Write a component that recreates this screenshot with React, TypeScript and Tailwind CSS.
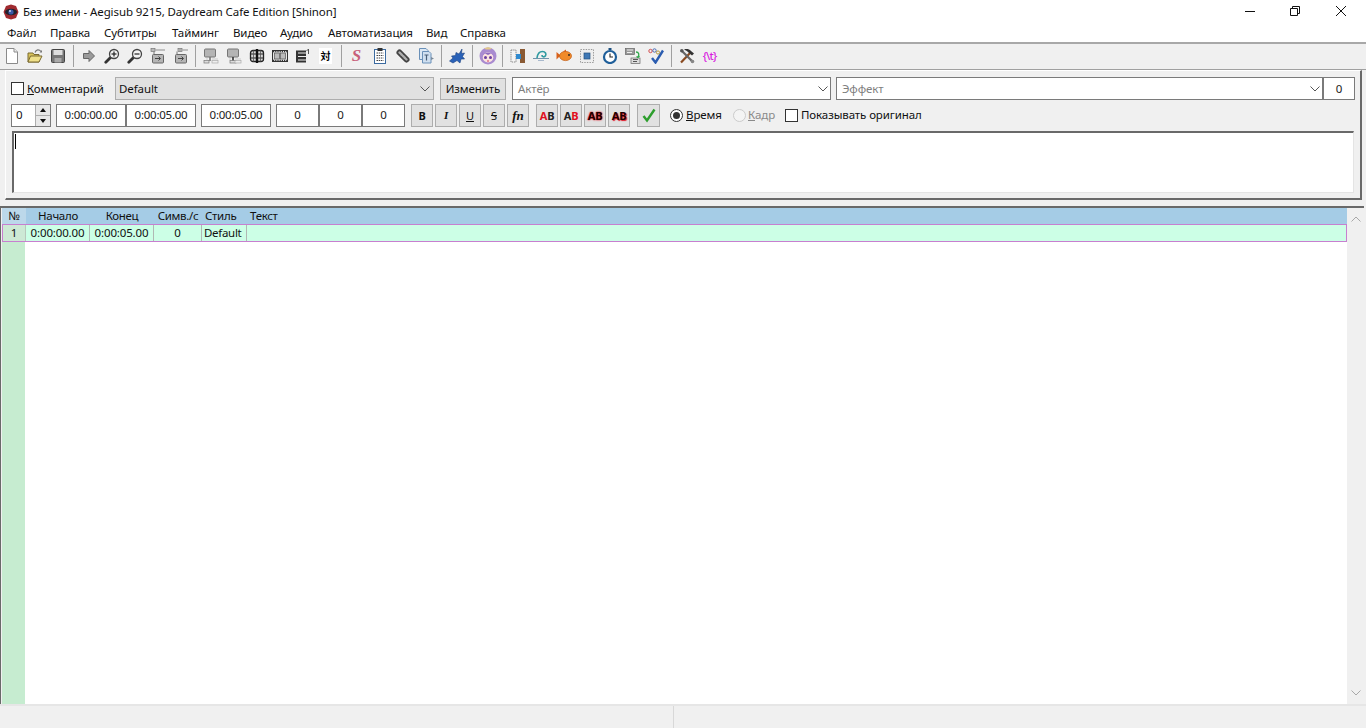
import React from 'react';

function Chevron({ className = '' }: { className?: string }) {
  return (
    <svg viewBox="0 0 10 6" className={`h-[6px] w-[10px] flex-shrink-0 ${className}`} fill="none" stroke="currentColor" strokeWidth="1">
      <path d="M0.5 0.5 L5 5 L9.5 0.5" />
    </svg>
  );
}

function Svg({ children }: { children: React.ReactNode }) {
  return (
    <svg viewBox="0 0 16 16" className="h-4 w-4">
      {children}
    </svg>
  );
}

const IconNew = () => (
  <Svg>
    <path d="M2.5 0.5H10L13.5 4V15.5H2.5Z" fill="#fff" stroke="#8a8a8a" />
    <path d="M10 0.5V4H13.5" fill="#eee" stroke="#8a8a8a" />
  </Svg>
);
const IconOpen = () => (
  <Svg>
    <path d="M1 5H6L7 6.5H12V14H1Z" fill="#d9c45a" stroke="#7a6a30" />
    <path d="M1 14L3.5 8H15L12 14Z" fill="#efe08a" stroke="#7a6a30" />
    <path d="M8 4.5C9 1.5 12 1 14 3.5" fill="none" stroke="#777" strokeWidth="1.2" />
    <path d="M12.5 4.5H15V2Z" fill="#777" />
  </Svg>
);
const IconSave = () => (
  <Svg>
    <rect x="1.5" y="1.5" width="13" height="13" rx="1" fill="#777" stroke="#444" />
    <rect x="3.5" y="2" width="9" height="5" fill="#ddd" />
    <rect x="4.5" y="10" width="7" height="4.5" fill="#aaa" />
  </Svg>
);
const IconArrow = () => (
  <Svg>
    <path d="M2.5 5.5H8V2.5L13.5 8L8 13.5V10.5H2.5Z" fill="#9a9a9a" stroke="#666" />
  </Svg>
);
const IconZoom = ({ plus }: { plus?: boolean }) => (
  <Svg>
    <path d="M6.5 9.5L1.8 14.2" stroke="#333" strokeWidth="2.8" strokeLinecap="round" />
    <circle cx="10" cy="6" r="4.5" fill="#f2f2f2" stroke="#444" strokeWidth="1.3" />
    <path d="M7.5 6H12.5" stroke="#222" strokeWidth="1.2" />
    {plus && <path d="M10 3.5V8.5" stroke="#222" strokeWidth="1.2" />}
  </Svg>
);
const IconJump = ({ down }: { down?: boolean }) => (
  <Svg>
    <rect x={down ? 5 : 1} y="0.5" width="4" height="3" fill="#bbb" stroke="#777" strokeWidth="0.7" />
    <path d="M5 2H15" stroke="#aaa" strokeWidth="1.4" />
    <path d="M4 3.5V6" stroke="#777" />
    <rect x="2.5" y="6.5" width="11" height="8.5" rx="1" fill="#b5b5b5" stroke="#666" />
    <path d="M5 10.5H10M8.5 8.5L10.5 10.5L8.5 12.5" fill="none" stroke="#444" />
  </Svg>
);
const IconMonitor = ({ dark }: { dark?: boolean }) => (
  <Svg>
    <rect x="1.5" y="1" width="11" height="8" rx="1" fill="#b4b4b4" stroke="#777" />
    <path d="M7 9V13" stroke={dark ? '#333' : '#777'} strokeWidth="1.6" />
    <path d="M3 11H5M9 11H15" stroke="#ccc" />
    <rect x={dark ? 4 : 1} y="12.5" width={dark ? 6 : 5} height="2.5" fill="#ddd" stroke="#777" strokeWidth="0.7" />
    <rect x="9" y="12.5" width="6" height="2.5" fill="#eee" stroke="#aaa" strokeWidth="0.7" />
  </Svg>
);
const IconFilmCross = () => (
  <Svg>
    <rect x="1.5" y="2.5" width="13" height="11" rx="2.5" fill="#d8d8d8" stroke="#222" strokeWidth="1.3" />
    <path d="M1.5 6H14.5M1.5 10H14.5" stroke="#222" strokeWidth="1.2" />
    <path d="M8 1V15" stroke="#111" strokeWidth="2.4" />
    <path d="M4.5 2.5V13.5M11.5 2.5V13.5" stroke="#555" strokeWidth="0.8" />
  </Svg>
);
const IconFilm = () => (
  <Svg>
    <rect x="0.5" y="2.5" width="15" height="11" fill="#e6e6e6" stroke="#333" />
    <path d="M1 3.5H15M1 12.5H15" stroke="#333" strokeWidth="1.6" strokeDasharray="1.2 1" />
    <rect x="2.5" y="5" width="5" height="6" fill="#bbb" stroke="#555" strokeWidth="0.7" />
    <rect x="8.5" y="5" width="5" height="6" fill="#bbb" stroke="#555" strokeWidth="0.7" />
  </Svg>
);
const IconFilmTime = () => (
  <Svg>
    <rect x="1" y="2.5" width="10" height="12" fill="#333" />
    <path d="M3 5H11M3 8.5H11M3 12H11" stroke="#eee" />
    <path d="M13.5 1V6" stroke="#555" />
    <path d="M11.5 3L13.5 1" stroke="#555" />
  </Svg>
);
const IconSnail = () => (
  <Svg>
    <path d="M0 10.5H16" stroke="#6f93aa" />
    <path d="M4 10C4.5 6 6.5 3.5 9.5 3.5C12.5 3.5 13.5 6 12.5 7.8C11.3 9.5 8.8 9 9 7" fill="none" stroke="#2f9aa0" strokeWidth="1.6" />
    <path d="M5 12.5H11" stroke="#a8b8cc" />
  </Svg>
);
const IconFish = () => (
  <Svg>
    <path d="M0.5 4L4.5 7.5L0.5 11.5Z" fill="#d8601a" />
    <ellipse cx="9.5" cy="8" rx="6" ry="4.6" fill="#f08a2a" stroke="#c25a10" strokeWidth="0.7" />
    <path d="M7 3.5L10 1.5V4Z" fill="#d8601a" />
    <circle cx="13" cy="7" r="0.9" fill="#222" />
  </Svg>
);
const IconSelect = () => (
  <Svg>
    <rect x="1.5" y="1.5" width="13" height="13" fill="#eee" stroke="#999" strokeDasharray="1.4 1.2" />
    <rect x="5" y="5" width="6" height="6" fill="#3f78b5" stroke="#24507f" strokeWidth="0.7" />
  </Svg>
);
const IconClock = () => (
  <Svg>
    <rect x="6.5" y="0" width="3" height="2" fill="#1b4f80" />
    <circle cx="8" cy="9" r="6" fill="#fff" stroke="#1f5f9a" strokeWidth="2.2" />
    <path d="M8 5.5V9H11" fill="none" stroke="#222" strokeWidth="1.1" />
  </Svg>
);
const IconTranslate = () => (
  <Svg>
    <rect x="0.5" y="0.5" width="9" height="6" fill="#999" stroke="#666" strokeWidth="0.7" />
    <rect x="6" y="10" width="9" height="5.5" fill="#ddd" stroke="#666" strokeWidth="0.7" />
    <path d="M2 2H8M2 4.5H7" stroke="#eee" />
    <path d="M8 11.5H13M8 13.5H12" stroke="#555" />
    <path d="M11 4C14 4 14.5 7 13 9M11.5 8.5L13 9.5L14.5 8" fill="none" stroke="#2fa84a" strokeWidth="1.3" />
  </Svg>
);
const IconCheckAbc = () => (
  <Svg>
    <path d="M4 10L7.5 14.5L15 2.5" fill="none" stroke="#2a5cb0" strokeWidth="2.4" />
    <circle cx="2.5" cy="3" r="1.7" fill="none" stroke="#d04040" strokeWidth="0.9" />
    <circle cx="6.5" cy="2.5" r="1.7" fill="none" stroke="#3a60b0" strokeWidth="0.9" />
    <circle cx="10" cy="4.5" r="1.6" fill="none" stroke="#b0902a" strokeWidth="0.9" />
  </Svg>
);
const IconTools = () => (
  <Svg>
    <path d="M2 14.5L12 4" stroke="#8a4a20" strokeWidth="2.2" />
    <path d="M5 1.5C8 0.5 10 1 12 3L15 5.5L13 7.5L9.5 4.5C8 3 7 2.5 5 1.5Z" fill="#333" />
    <path d="M3 3L14 14" stroke="#666" strokeWidth="2.2" />
    <circle cx="2.8" cy="2.8" r="1.8" fill="#555" />
    <circle cx="13.5" cy="13.5" r="1.8" fill="#888" />
  </Svg>
);
const IconClipboard = () => (
  <Svg>
    <rect x="2.5" y="1.5" width="11" height="14" fill="#fff" stroke="#3a6aa0" />
    <rect x="5.5" y="0" width="5" height="3" fill="#333" />
    <path d="M4.5 5H11.5M4.5 7.5H11.5M4.5 10H11.5M4.5 12.5H11.5" stroke="#444" strokeDasharray="1.5 0.7" />
  </Svg>
);
const IconPill = () => (
  <Svg>
    <path d="M4.5 4.5L11.5 11.5" stroke="#444" strokeWidth="6" strokeLinecap="round" />
    <path d="M4.5 4.5L11.5 11.5" stroke="#b0b0b0" strokeWidth="2.4" strokeLinecap="round" strokeDasharray="1 1.3" />
  </Svg>
);
const IconDocT = () => (
  <Svg>
    <path d="M1.5 0.5H8L10 2.5V11.5H1.5Z" fill="#dce8f4" stroke="#6a90b8" />
    <path d="M4.5 3.5H11L13 5.5V15H4.5Z" fill="#cfdff0" stroke="#6a90b8" />
    <path d="M6.5 7H10.5M8.5 7V12.5" stroke="#4a5f78" strokeWidth="1.2" />
    <path d="M13 9L16 10.5L13 12Z" fill="#7a8a9a" />
  </Svg>
);
const IconSplash = () => (
  <Svg>
    <path d="M0.5 13L4 10L2.5 8L6.5 7.5L7 4.5L10 6L13 1L12.5 5.5L15.5 5L13.5 8.5L15.5 11L12 11L11 15L8 12.5L4 15Z" fill="#2a62b8" stroke="#1a3f80" strokeWidth="0.6" />
  </Svg>
);
const IconAnime = () => (
  <svg viewBox="0 0 18 18" className="h-[18px] w-[18px]">
    <circle cx="9" cy="9" r="8.5" fill="#a98bd0" />
    <path d="M5 1.5L9 0L13 1.5L11 2.5H7Z" fill="#e2c88a" />
    <ellipse cx="9" cy="10.5" rx="5.3" ry="5" fill="#fbe3e0" />
    <path d="M3.5 8C6 5 12 5 14.5 8L12 6.5L9 8L6 6.5Z" fill="#8f6cc0" />
    <circle cx="6.5" cy="10.5" r="1.5" fill="#6a3fa0" />
    <circle cx="11.5" cy="10.5" r="1.5" fill="#6a3fa0" />
    <path d="M8 14H10" stroke="#d04060" />
  </svg>
);
const IconDoor = () => (
  <Svg>
    <rect x="1" y="2" width="5" height="12" fill="#f4f4f4" stroke="#888" strokeDasharray="1.4 0.8" />
    <rect x="10" y="1" width="5" height="14" fill="#8a5a34" />
    <rect x="6" y="6" width="5" height="5" fill="#2f8ad0" />
  </Svg>
);
const IconEye = () => (
  <svg viewBox="0 0 16 16" className="h-4 w-4">
    <path d="M8 0.5L13 2L15.5 8L13 14L8 15.5L3 14L0.5 8L3 2Z" fill="#a02a30" />
    <ellipse cx="8" cy="8" rx="6" ry="3.2" fill="#20222e" />
    <circle cx="8" cy="8" r="2.6" fill="#3a58a8" />
    <circle cx="7" cy="7" r="0.9" fill="#d8e0f0" />
  </svg>
);

type Tool = { node: React.ReactNode } | { sep: number };

const tools: Tool[] = [
  { node: <IconNew /> },
  { node: <IconOpen /> },
  { node: <IconSave /> },
  { sep: 8 },
  { node: <IconArrow /> },
  { node: <IconZoom plus /> },
  { node: <IconZoom /> },
  { node: <IconJump /> },
  { node: <IconJump down /> },
  { sep: 7 },
  { node: <IconMonitor /> },
  { node: <IconMonitor dark /> },
  { node: <IconFilmCross /> },
  { node: <IconFilm /> },
  { node: <IconFilmTime /> },
  { node: <span className="bg-white px-[2px] font-['Noto_Sans_CJK_SC',sans-serif] text-[10px] leading-4 font-bold text-black">対</span> },
  { sep: 8 },
  { node: <span className="font-['Liberation_Serif',serif] text-[17px] leading-4 font-bold text-[#c8607a] italic">S</span> },
  { node: <IconClipboard /> },
  { node: <IconPill /> },
  { node: <IconDocT /> },
  { sep: 8 },
  { node: <IconSplash /> },
  { sep: 8 },
  { node: <IconAnime /> },
  { sep: 7 },
  { node: <IconDoor /> },
  { node: <IconSnail /> },
  { node: <IconFish /> },
  { node: <IconSelect /> },
  { node: <IconClock /> },
  { node: <IconTranslate /> },
  { node: <IconCheckAbc /> },
  { sep: 8 },
  { node: <IconTools /> },
  { node: <span className="text-[11px] leading-4 font-medium tracking-[-0.8px] text-[#d820e0]">{'{\\t}'}</span> },
];

const menus: [string, string][] = [
  ['Файл', 'w-[43px]'],
  ['Правка', 'w-[54px]'],
  ['Субтитры', 'w-[68px]'],
  ['Тайминг', 'w-[61px]'],
  ['Видео', 'w-[47px]'],
  ['Аудио', 'w-[48px]'],
  ['Автоматизация', 'w-[98px]'],
  ['Вид', 'w-[34px]'],
  ['Справка', 'w-[60px]'],
];

function Checkbox() {
  return <span className="h-[13px] w-[13px] flex-shrink-0 border border-[#333] bg-white" />;
}

function ValueBox({ value, className = '' }: { value: string; className?: string }) {
  return (
    <div className={`flex h-[23px] items-center justify-center border border-[#7a7a7a] bg-white tracking-[-0.25px] text-[#222] ${className}`}>
      {value}
    </div>
  );
}

function StyleButton({ children, className = '' }: { children: React.ReactNode; className?: string }) {
  return (
    <div className={`flex h-[23px] w-[22px] items-center justify-center border border-[#adadad] bg-[#e1e1e1] text-[11px] ${className}`}>
      {children}
    </div>
  );
}

function Combo({ label, className = '' }: { label: string; className?: string }) {
  return (
    <div className={`flex h-[23px] items-center justify-between border border-[#7a7a7a] bg-white pr-[2px] pl-[5px] text-[#808080] ${className}`}>
      <span>{label}</span>
      <Chevron className="text-[#555]" />
    </div>
  );
}

const columns: { head: string; cell: string; width: string }[] = [
  { head: 'Начало', cell: '0:00:00.00', width: 'w-[64px]' },
  { head: 'Конец', cell: '0:00:05.00', width: 'w-[64px]' },
  { head: 'Симв./с', cell: '0', width: 'w-[48px]' },
];

export default function App() {
  return (
    <div className="flex h-[728px] w-[1366px] flex-col overflow-hidden bg-[#f0f0f0] font-['Noto_Sans','Liberation_Sans',sans-serif] text-[11.5px] leading-none tracking-[-0.1px] text-[#111]">
      {/* title bar */}
      <div className="flex h-[23px] items-center bg-white pl-[3px]">
        <IconEye />
        <span className="ml-[4px] flex-1">Без имени - Aegisub 9215, Daydream Cafe Edition [Shinon]</span>
        <div className="flex items-center pr-[2px] pb-[2px]">
          <div className="flex w-[44px] justify-center">
            <svg viewBox="0 0 12 12" className="h-3 w-3" fill="none" stroke="#111"><path d="M1 6.5H11" /></svg>
          </div>
          <div className="flex w-[46px] justify-center">
            <svg viewBox="0 0 12 12" className="h-3 w-3" fill="none" stroke="#111"><path d="M1.5 3.5H8.5V10.5H1.5Z M3.5 3.5V1.5H10.5V8.5H8.5" /></svg>
          </div>
          <div className="flex w-[46px] justify-center">
            <svg viewBox="0 0 12 12" className="h-3 w-3" fill="none" stroke="#111"><path d="M1 1L11 11M11 1L1 11" /></svg>
          </div>
        </div>
      </div>

      {/* menu */}
      <div className="flex h-[19px] items-center bg-white pl-[7px]">
        {menus.map(([label, width]) => (
          <span key={label} className={width}>{label}</span>
        ))}
      </div>

      {/* toolbar */}
      <div className="flex h-[28px] items-center border-t-2 border-b border-t-[#a8a8a8] border-b-[#a0a0a0] bg-[#f0f0f0] pb-[1px]">
        {tools.map((tool, i) =>
          'sep' in tool ? (
            <div key={i} className={`flex h-[22px] justify-center ${tool.sep === 7 ? 'w-[7px]' : 'w-[8px]'}`}>
              <div className="w-px bg-[#a0a0a0]" />
            </div>
          ) : (
            <div key={i} className="flex h-[22px] w-[23px] items-center justify-center">
              {tool.node}
            </div>
          ),
        )}
      </div>

      {/* edit box */}
      <div className="mr-[4px] ml-[5px] h-[130px] flex-shrink-0 border-t border-r-2 border-b-2 border-l border-t-white border-r-[#696969] border-b-[#696969] border-l-white pt-[6px] pl-[5px]">
        <div className="flex h-[23px] items-center">
          <div className="flex w-[104px] items-center">
            <Checkbox />
            <span className="ml-[3px]"><span className="underline">К</span>омментарий</span>
          </div>
          <div className="flex h-[23px] w-[319px] items-center justify-between border border-[#adadad] bg-[#e1e1e1] pr-[3px] pl-[3px]">
            <span>Default</span>
            <Chevron className="text-[#555]" />
          </div>
          <div className="ml-[6px] flex h-[22px] w-[66px] items-center justify-center border border-[#adadad] bg-[#e1e1e1]">
            Изменить
          </div>
          <Combo label="Актёр" className="ml-[6px] w-[319px]" />
          <Combo label="Эффект" className="ml-[5px] w-[487px]" />
          <ValueBox value="0" className="w-[32px]" />
        </div>

        <div className="mt-[3px] flex h-[24px] items-center">
          <div className="flex h-[23px] w-[40px] items-center justify-between border border-[#7a7a7a] bg-white pl-[4px]">
            <span>0</span>
            <div className="flex h-full w-[15px] flex-col border-l border-[#adadad] bg-[#e8e8e8]">
              <div className="flex flex-1 items-center justify-center border-b border-[#adadad]">
                <span className="h-0 w-0 border-r-[3px] border-b-[4px] border-l-[3px] border-r-transparent border-b-[#111] border-l-transparent" />
              </div>
              <div className="flex flex-1 items-center justify-center">
                <span className="h-0 w-0 border-t-[4px] border-r-[3px] border-l-[3px] border-t-[#111] border-r-transparent border-l-transparent" />
              </div>
            </div>
          </div>
          <ValueBox value="0:00:00.00" className="ml-[5px] w-[70px]" />
          <ValueBox value="0:00:05.00" className="w-[70px]" />
          <ValueBox value="0:00:05.00" className="ml-[5px] w-[70px]" />
          <ValueBox value="0" className="ml-[5px] w-[43px]" />
          <ValueBox value="0" className="w-[43px]" />
          <ValueBox value="0" className="w-[43px]" />

          <div className="ml-[6px] flex gap-[2px]">
            <StyleButton className="font-bold">B</StyleButton>
            <StyleButton className="font-['Liberation_Serif',serif] font-bold italic">I</StyleButton>
            <StyleButton className="underline">U</StyleButton>
            <StyleButton className="line-through">S</StyleButton>
            <StyleButton className="font-['Liberation_Serif',serif] text-[13px] font-bold italic">fn</StyleButton>
          </div>
          <div className="ml-[7px] flex gap-[2px] text-[11px] font-bold">
            <StyleButton>
              <span className="text-[#e01020]">A</span>
              <span className="text-[#222]">B</span>
            </StyleButton>
            <StyleButton>
              <span className="text-[#222]">A</span>
              <span className="text-[#e01020]">B</span>
            </StyleButton>
            <StyleButton className="text-[#200000] [text-shadow:0_0_2px_#e01020,0_0_1px_#e01020]">AB</StyleButton>
            <StyleButton className="text-[#200000] [text-shadow:1px_1px_1px_#e01020]">AB</StyleButton>
          </div>
          <StyleButton className="ml-[7px] w-[23px]">
            <svg viewBox="0 0 16 16" className="h-4 w-4">
              <path d="M2.5 9L6 13.5L13.5 2.5" fill="none" stroke="#2c9e2c" strokeWidth="2.4" />
            </svg>
          </StyleButton>

          <div className="ml-[10px] flex w-[63px] items-center">
            <span className="flex h-[13px] w-[13px] items-center justify-center rounded-full border border-[#333] bg-white">
              <span className="h-[7px] w-[7px] rounded-full bg-[#333]" />
            </span>
            <span className="ml-[3px]"><span className="underline">В</span>ремя</span>
          </div>
          <div className="flex w-[52px] items-center text-[#8a8a8a]">
            <span className="h-[13px] w-[13px] rounded-full border border-[#ccc] bg-[#f4f4f4]" />
            <span className="ml-[2px]"><span className="underline">К</span>адр</span>
          </div>
          <Checkbox />
          <span className="ml-[3px]">Показывать оригинал</span>
        </div>

        <div className="mt-[4px] ml-[1px] h-[62px] w-[1342px] border-t-2 border-r border-b border-l-2 border-t-[#696969] border-r-[#e4e4e4] border-b-[#e4e4e4] border-l-[#696969] bg-white">
          <div className="mt-[1px] ml-[1px] h-[15px] w-px bg-black" />
        </div>
      </div>

      {/* subtitle grid */}
      <div className="mt-[6px] mr-[2px] flex min-h-0 flex-1 border-t-2 border-t-[#696969]">
        <div className="flex w-[1347px] flex-col border-l border-l-[#696969] bg-[#f0f0f0] pl-px">
          <div className="flex h-[16px] items-center bg-[#a5cce6] tracking-[-0.3px]">
            <span className="flex h-full w-[24px] items-center justify-center bg-[#bcd8ea]">№</span>
            {columns.map((col) => (
              <span key={col.head} className={`${col.width} text-center`}>{col.head}</span>
            ))}
            <span className="w-[45px] pl-[3px]">Стиль</span>
            <span className="pl-[3px]">Текст</span>
          </div>
          <div className="flex h-[18px] items-stretch border border-[#c77fd0] bg-[#ccffe6] tracking-[-0.15px]">
            <span className="flex w-[23px] items-center justify-center border-r border-[#b8c8bc] bg-[#cde9d5]">1</span>
            {columns.map((col) => (
              <span key={col.head} className={`flex items-center justify-center border-r border-[#b0b8b4] ${col.width}`}>
                {col.cell}
              </span>
            ))}
            <span className="flex w-[45px] items-center border-r border-[#b0b8b4] pl-[2px] tracking-[-0.3px]">Default</span>
          </div>
          <div className="flex min-h-0 flex-1 bg-white">
            <div className="w-[23px] bg-[#c6ecd0]" />
          </div>
        </div>
        <div className="flex w-[17px] flex-col items-center justify-between bg-[#f0f0f0] py-[8px] text-[#a8a8a8]">
          <Chevron className="rotate-180" />
          <Chevron />
        </div>
      </div>

      {/* status bar */}
      <div className="flex h-[24px] flex-shrink-0 border-t-2 border-t-[#e6e6e6] bg-[#f0f0f0]">
        <div className="w-[674px] border-r border-[#d8d8d8]" />
      </div>
    </div>
  );
}
